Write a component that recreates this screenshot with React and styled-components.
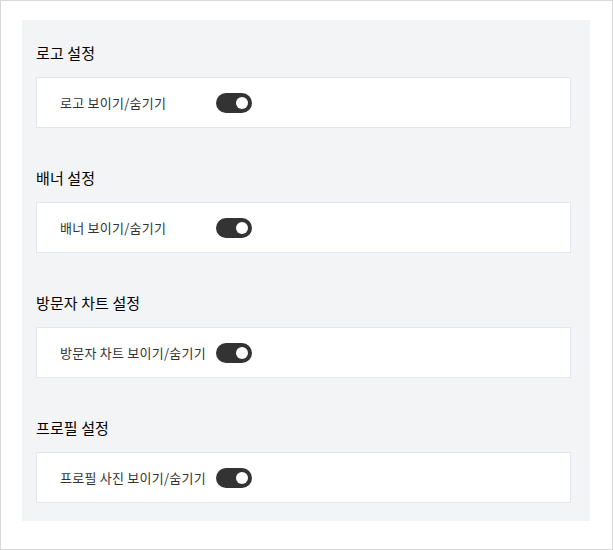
import React from "react";
import styled, { createGlobalStyle } from "styled-components";

const GlobalStyle = createGlobalStyle`
  body {
    margin: 0;
    font-family: "Noto Sans CJK KR", "Noto Sans", sans-serif;
    background: #fff;
  }
`;

const Frame = styled.div`
  width: 613px;
  height: 550px;
  box-sizing: border-box;
  border: 1px solid #d9d9d9;
  padding: 19px 0 0 21px;
`;

const Panel = styled.div`
  width: 568px;
  height: 501px;
  box-sizing: border-box;
  background: #f3f4f6;
  padding: 23px 19px 18px 14px;
  display: flex;
  flex-direction: column;
  gap: 40px;
`;

const Section = styled.section`
  display: flex;
  flex-direction: column;
  gap: 14px;
`;

const Title = styled.h3`
  margin: 0;
  font-size: 15px;
  line-height: 20px;
  font-weight: 400;
  letter-spacing: 0.1px;
  color: #000;
`;

const Card = styled.div`
  height: 51px;
  box-sizing: border-box;
  background: #fff;
  border: 1px solid #e3e6ec;
  padding-left: 23px;
  display: flex;
  align-items: center;
  gap: 10px;
`;

const Label = styled.span`
  min-width: 146px;
  font-size: 13px;
  line-height: 20px;
  letter-spacing: 0.25px;
  color: #333;
`;

const Toggle = styled.button`
  width: 36px;
  height: 20px;
  padding: 0;
  border: none;
  border-radius: 10px;
  background: ${p => (p.$on ? "#333" : "#ccc")};
  position: relative;
  cursor: pointer;

  &::after {
    content: "";
    position: absolute;
    top: 4px;
    left: ${p => (p.$on ? "20px" : "4px")};
    width: 12px;
    height: 12px;
    border-radius: 50%;
    background: #fff;
  }
`;

const SETTINGS = [
  { id: "logo", title: "로고 설정", label: "로고 보이기/숨기기" },
  { id: "banner", title: "배너 설정", label: "배너 보이기/숨기기" },
  { id: "chart", title: "방문자 차트 설정", label: "방문자 차트 보이기/숨기기" },
  { id: "profile", title: "프로필 설정", label: "프로필 사진 보이기/숨기기" },
];

const App = () => {
  return (
    <>
      <GlobalStyle />
      <Frame>
        <Panel>
          {SETTINGS.map(s => (
            <Section key={s.id}>
              <Title>{s.title}</Title>
              <Card>
                <Label>{s.label}</Label>
                <Toggle $on aria-label={s.label} />
              </Card>
            </Section>
          ))}
        </Panel>
      </Frame>
    </>
  );
};

export default App;
